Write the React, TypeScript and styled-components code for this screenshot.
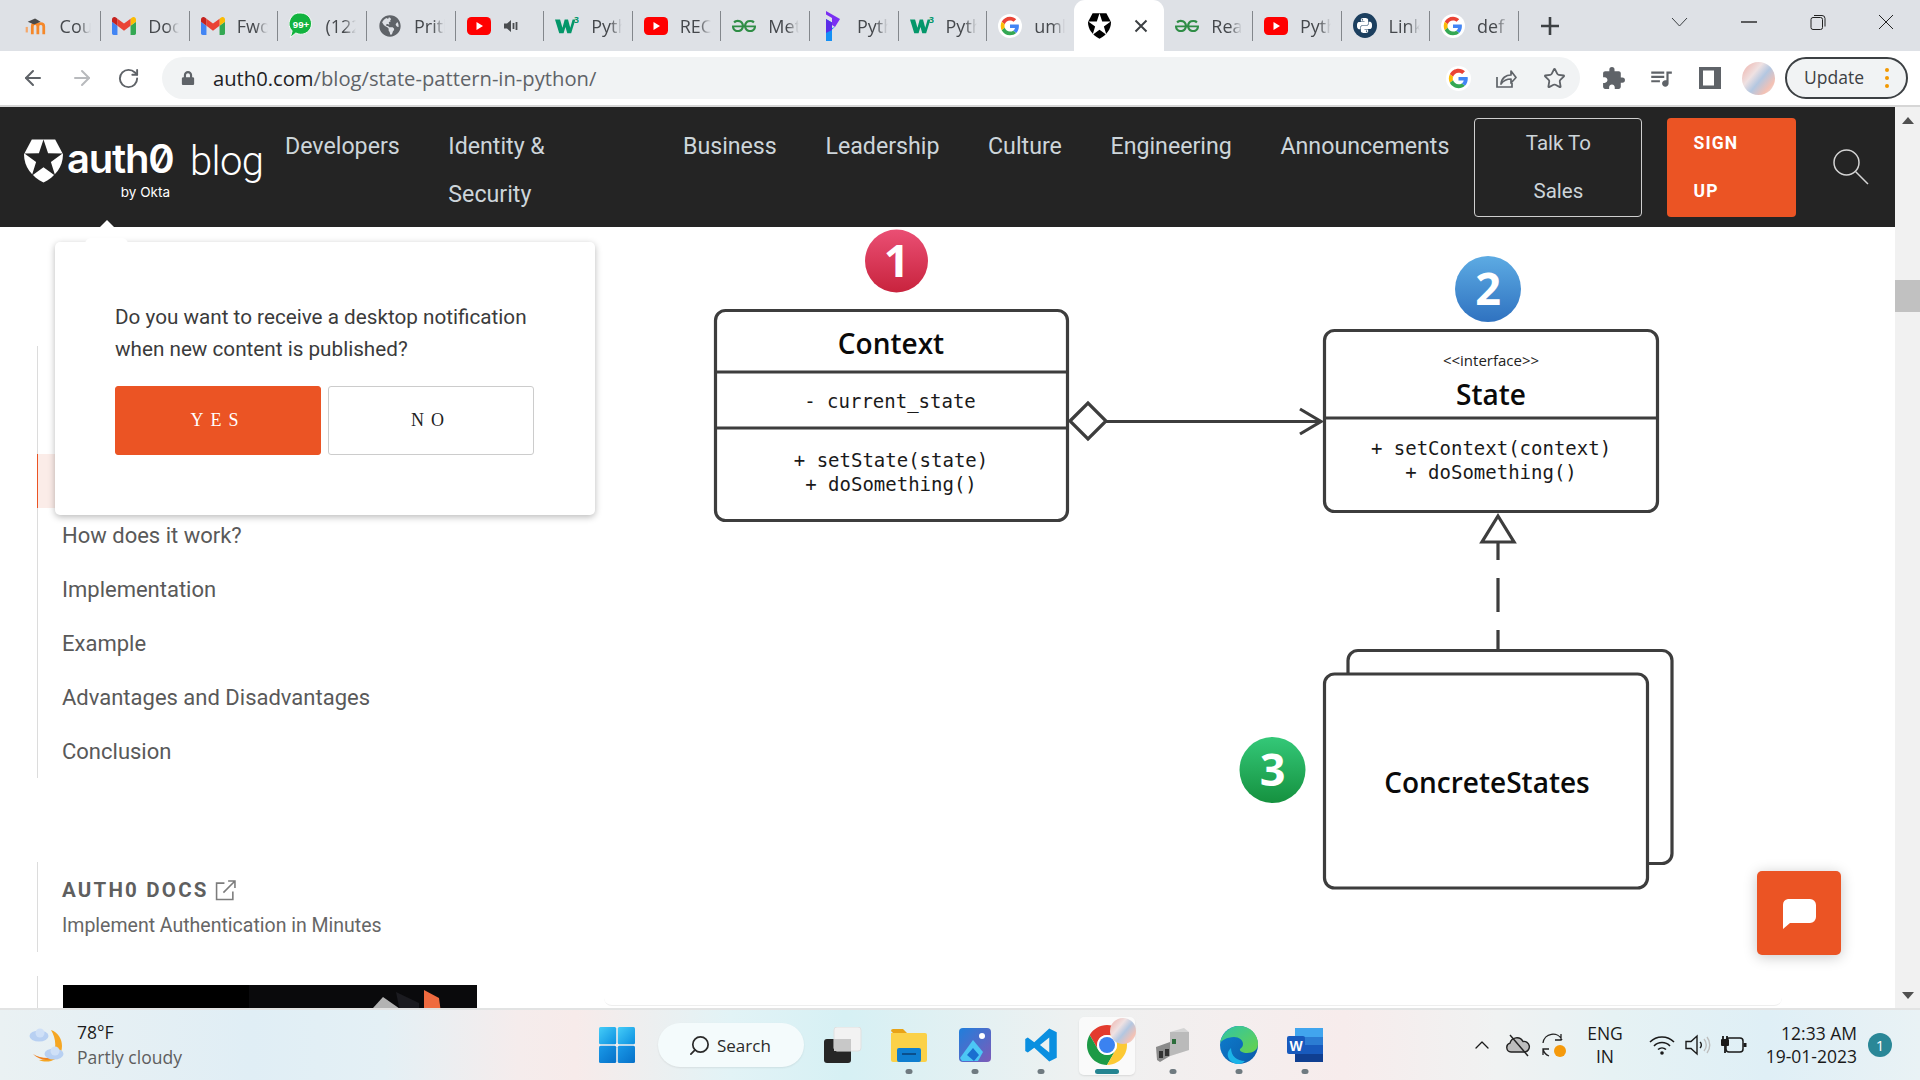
import React from "react";
import styled, { createGlobalStyle } from "styled-components";
import { ArrowLeft, ArrowRight, RotateCw, Star, Search as SearchGlyph, ChevronUp } from "lucide-react";
import { MdExtension, MdOutlineQueueMusic } from "react-icons/md";
import { SiGeeksforgeeks, SiPython } from "react-icons/si";
import { FaGlobeAmericas, FaLock } from "react-icons/fa";

const ORANGE = "#eb5424";
const CHROME_FONT = `"Open Sans", "Noto Sans", sans-serif`;
const SITE_FONT = `Roboto, "Liberation Sans", sans-serif`;

const Global = createGlobalStyle`
  html, body { margin: 0; padding: 0; width: 1920px; height: 1080px; overflow: hidden; background: #fff; }
  * { box-sizing: border-box; }
`;

const Screen = styled.div`
  width: 1920px;
  height: 1080px;
  display: flex;
  flex-direction: column;
  overflow: hidden;
  font-family: ${SITE_FONT};
  position: relative;
`;

/* ---------- browser chrome ---------- */
const TabStrip = styled.div`
  height: 51px;
  flex: none;
  background: #dee1e6;
  display: flex;
  padding-left: 12.6px;
  position: relative;
`;
const TabBox = styled.div<{ $active?: boolean; $noDivider?: boolean }>`
  position: relative;
  width: ${(p) => (p.$active ? "90.6px" : "88.6px")};
  margin-left: ${(p) => (p.$active ? "-2px" : "0")};
  height: 51px;
  flex: none;
  display: flex;
  align-items: center;
  padding-left: ${(p) => (p.$active ? "14px" : "11px")};
  background: ${(p) => (p.$active ? "#fff" : "transparent")};
  border-radius: ${(p) => (p.$active ? "11px 11px 0 0" : "0")};
  &::after {
    content: "";
    display: ${(p) => (p.$noDivider ? "none" : "block")};
    position: absolute;
    right: 0;
    top: 11px;
    width: 1px;
    height: 30px;
    background: #83878c;
  }
`;
const TabIcon = styled.span`
  width: 24px;
  height: 24px;
  flex: none;
  display: flex;
  align-items: center;
  justify-content: center;
  margin-right: 12px;
`;
const TabTitle = styled.span`
  font: 400 18px/24px ${CHROME_FONT};
  color: #45484c;
  width: 31px;
  overflow: hidden;
  white-space: nowrap;
  -webkit-mask-image: linear-gradient(90deg, #000 60%, transparent);
  mask-image: linear-gradient(90deg, #000 60%, transparent);
`;
const TabClose = styled.span`
  margin-left: 10px;
  display: flex;
`;
const NewTab = styled.span`
  margin-left: 21px;
  margin-top: 16px;
  height: 20px;
  display: flex;
`;
const WindowControls = styled.div`
  margin-left: auto;
  display: flex;
  align-items: center;
  height: 51px;
  padding-bottom: 8px;
`;
const WindowButton = styled.span<{ $w: number }>`
  width: ${(p) => p.$w}px;
  display: flex;
  justify-content: center;
`;

const Toolbar = styled.div`
  height: 54px;
  flex: none;
  background: #fff;
  display: flex;
  align-items: center;
  padding: 0 12px 0 21px;
`;
const ToolIcon = styled.span<{ $mr: number; $color?: string }>`
  display: flex;
  flex: none;
  margin-right: ${(p) => p.$mr}px;
  color: ${(p) => p.$color || "#5f6368"};
`;
const Omnibox = styled.div`
  width: 1418px;
  height: 42px;
  border-radius: 21px;
  background: #f1f3f4;
  display: flex;
  align-items: center;
  padding-left: 19px;
  flex: none;
  margin-right: 21px;
`;
const Url = styled.div`
  font: 400 20.2px/44px ${CHROME_FONT};
  color: #5f6368;
  margin-left: 18px;
  flex: 1;
  white-space: nowrap;
  b { font-weight: 400; color: #202124; }
`;
const UpdatePill = styled.div`
  width: 123px;
  height: 42px;
  margin-left: 10px;
  border: 2px solid #3c4043;
  border-radius: 21px;
  background: #f1f3f4;
  display: flex;
  align-items: center;
  padding-left: 17px;
  font: 400 17.5px/1 ${CHROME_FONT};
  color: #3c4043;
  gap: 21px;
  flex: none;
`;
const OrangeDots = styled.span`
  display: flex;
  flex-direction: column;
  gap: 3.5px;
  i { width: 4.5px; height: 4.5px; border-radius: 50%; background: #f29900; display: block; }
`;
const Avatar = styled.span<{ $size: number }>`
  width: ${(p) => p.$size}px;
  height: ${(p) => p.$size}px;
  border-radius: 50%;
  flex: none;
  display: block;
  background:
    linear-gradient(130deg, rgba(240,170,160,.9) 0%, rgba(255,235,230,.3) 35%, rgba(170,195,225,.85) 55%, rgba(245,190,175,.9) 80%, rgba(230,235,240,1) 100%),
    #e8dde0;
`;
const ChromeDivider = styled.div`
  height: 2px;
  flex: none;
  background: #d6d6d6;
`;

/* ---------- web page ---------- */
const Viewport = styled.div`
  height: 901px;
  flex: none;
  display: flex;
  position: relative;
`;
const Page = styled.div`
  width: 1895px;
  flex: none;
  display: flex;
  flex-direction: column;
  overflow: hidden;
`;
const NavBar = styled.nav`
  height: 120px;
  flex: none;
  background: #242424;
  display: flex;
  align-items: flex-start;
  padding: 11px 26px 0 24px;
  position: relative;
  &::after {
    content: "";
    position: absolute;
    left: 100px;
    bottom: 0;
    border-left: 7px solid transparent;
    border-right: 7px solid transparent;
    border-bottom: 7px solid #fff;
  }
`;
const LogoBlock = styled.div`
  width: 261px;
  flex: none;
  display: flex;
  align-items: flex-start;
  padding-top: 21px;
`;
const LogoText = styled.div`
  margin-left: 4px;
  width: 103px;
  color: #fff;
`;
const LogoWord = styled.div`
  font: 600 40px/40px Inter, sans-serif;
  letter-spacing: -1.2px;
  font-feature-settings: "zero" 1;
  white-space: nowrap;
`;
const ByOkta = styled.div`
  font: 400 13.5px/16px Inter, sans-serif;
  text-align: right;
  margin-top: 5px;
`;
const BlogWord = styled.div`
  margin-left: 20px;
  font: 300 40px/44px ${SITE_FONT};
  color: #fff;
  margin-top: 1px;
  letter-spacing: -0.6px;
`;
const NavLinks = styled.div`
  display: flex;
  gap: 48.6px;
  flex: none;
  padding-top: 4px;
`;
const NavLink = styled.a<{ $w?: number }>`
  font: 400 23.2px/48px ${SITE_FONT};
  color: #cdd5da;
  display: block;
  width: ${(p) => (p.$w ? `${p.$w}px` : "auto")};
  white-space: nowrap;
`;
const TalkButton = styled.div`
  width: 168px;
  height: 99px;
  margin-left: 25px;
  flex: none;
  border: 1px solid #cfcfcf;
  border-radius: 4px;
  text-align: center;
  font: 400 20.5px/48px ${SITE_FONT};
  color: #cdd5da;
`;
const SignButton = styled.div`
  width: 129px;
  height: 99px;
  margin-left: 25px;
  flex: none;
  background: ${ORANGE};
  border-radius: 4px;
  padding: 1px 26px;
  font: 700 17.5px/48px ${SITE_FONT};
  letter-spacing: 1.2px;
  color: #fff;
`;
const SearchIconWrap = styled.div`
  margin-left: auto;
  margin-top: 31px;
  display: flex;
`;

const PageBody = styled.div`
  flex: 1;
  display: flex;
  min-height: 0;
`;
const Sidebar = styled.aside`
  width: 604px;
  flex: none;
  padding: 119px 0 0 37px;
`;
const Toc = styled.ul`
  margin: 0;
  padding: 0;
  list-style: none;
  border-left: 1px solid #dcdcdc;
  width: 540px;
`;
const TocItem = styled.li<{ $active?: boolean }>`
  height: 54px;
  padding-left: 24px;
  font: 400 22px/56px ${SITE_FONT};
  color: #595959;
  margin-left: -1px;
  border-left: 1px solid ${(p) => (p.$active ? ORANGE : "transparent")};
  background: ${(p) => (p.$active ? "#fbece8" : "transparent")};
`;
const DocsBlock = styled.div`
  margin-top: 84px;
  height: 90px;
  border-left: 1px solid #dcdcdc;
  padding: 15px 0 0 24px;
`;
const DocsHeading = styled.div`
  display: flex;
  align-items: center;
  gap: 6px;
  font: 700 20.5px/26px ${SITE_FONT};
  letter-spacing: 2.2px;
  color: #5f5f5f;
`;
const DocsSub = styled.div`
  font: 400 19.5px/26px ${SITE_FONT};
  color: #666;
  margin-top: 10px;
`;
const PromoBlock = styled.div`
  margin-top: 24px;
  height: 60px;
  border-left: 1px solid #dcdcdc;
  padding: 9px 0 0 25px;
`;
const Article = styled.main`
  width: 1178px;
  height: 779px;
  flex: none;
  padding-left: 96px;
  border-bottom: 1px solid #eee;
  border-bottom-left-radius: 8px;
  border-bottom-right-radius: 8px;
`;
const ScrollTrack = styled.div`
  width: 25px;
  flex: none;
  background: #f1f1f1;
  display: flex;
  flex-direction: column;
  align-items: center;
  padding-top: 10px;
`;
const ScrollThumb = styled.div`
  width: 25px;
  height: 32px;
  background: #c1c1c1;
  margin-top: 156px;
`;
const ScrollDown = styled.div`
  margin-top: auto;
  margin-bottom: 9px;
  display: flex;
`;
const Popup = styled.div`
  position: absolute;
  left: 55px;
  top: 135px;
  width: 540px;
  height: 273px;
  background: #fff;
  border-radius: 5px;
  box-shadow: 0 2px 7px rgba(0, 0, 0, 0.28);
  padding: 59px 60px 0;
  &::before {
    content: "";
    position: absolute;
    left: 30px;
    top: -4px;
    width: 43px;
    height: 6px;
    background: #fff;
    border-radius: 8px 8px 0 0;
  }
`;
const PopupText = styled.div`
  font: 400 20.7px/32px ${SITE_FONT};
  color: #3b3b3b;
  white-space: nowrap;
`;
const PopupButtons = styled.div`
  display: flex;
  gap: 7px;
  margin-top: 21px;
`;
const PopupButton = styled.div<{ $primary?: boolean }>`
  width: 206px;
  height: 69px;
  border-radius: 3px;
  background: ${(p) => (p.$primary ? ORANGE : "#fff")};
  border: 1px solid ${(p) => (p.$primary ? ORANGE : "#cccccc")};
  color: ${(p) => (p.$primary ? "#fff" : "#222")};
  font: 400 18px/67px "Liberation Serif", serif;
  letter-spacing: 7px;
  text-align: center;
`;
const ChatButton = styled.div`
  position: absolute;
  left: 1757px;
  top: 764px;
  width: 84px;
  height: 84px;
  padding-top: 1px;
  border-radius: 5px;
  background: ${ORANGE};
  box-shadow: 0 2px 14px rgba(0, 0, 0, 0.22);
  display: flex;
  align-items: center;
  justify-content: center;
`;

/* ---------- taskbar ---------- */
const Taskbar = styled.footer`
  height: 72px;
  flex: none;
  border-top: 2px solid #e2e3e3;
  display: flex;
  align-items: center;
  position: relative;
  background: linear-gradient(90deg, #eaf1f3 0%, #e0eef5 13%, #e4f0f5 20%, #f5ecec 27%, #f7ebea 30%, #e2f3f6 38%, #d6f0f4 44%, #eef1f1 56%, #f4eeee 64%, #f7ecec 70%, #f0f2f2 78%, #e6f2f4 84%, #dfeff6 92%, #e9f2f5 100%);
`;
const Weather = styled.div`
  width: 599px;
  flex: none;
  display: flex;
  align-items: center;
  padding-left: 29px;
  gap: 11px;
`;
const WeatherText = styled.div`
  font: 400 17.5px/25px ${CHROME_FONT};
  color: #1c1c1c;
  span { color: #5e5e5e; display: block; }
`;
const TaskCenter = styled.div`
  display: flex;
  align-items: center;
  flex: none;
`;
const WinLogo = styled.span`
  display: flex;
  margin-right: 23px;
`;
const TaskSearch = styled.div`
  width: 146px;
  height: 44px;
  border-radius: 22px;
  background: #f4fbfc;
  box-shadow: 0 1px 2px rgba(0, 0, 0, 0.08);
  display: flex;
  align-items: center;
  padding-left: 30px;
  gap: 6px;
  font: 400 17px/1 ${CHROME_FONT};
  color: #2a2a2a;
  margin-right: 6px;
`;
const MirroredSearch = styled(SearchGlyph)`
  transform: scaleX(-1);
`;
const TaskApp = styled.div<{ $active?: boolean; $noDot?: boolean }>`
  width: 66px;
  height: 70px;
  flex: none;
  display: flex;
  align-items: center;
  justify-content: center;
  position: relative;
  &::before {
    content: "";
    display: ${(p) => (p.$active ? "block" : "none")};
    position: absolute;
    left: 5px;
    right: 5px;
    top: 7px;
    bottom: 5px;
    background: rgba(255, 255, 255, 0.65);
    border-radius: 5px;
    box-shadow: 0 1px 2px rgba(0, 0, 0, 0.1);
  }
  &::after {
    content: "";
    display: ${(p) => (p.$noDot ? "none" : "block")};
    position: absolute;
    bottom: 6px;
    left: 50%;
    transform: translateX(-50%);
    height: 5px;
    border-radius: 3px;
    width: ${(p) => (p.$active ? "24px" : "7px")};
    background: ${(p) => (p.$active ? "#248491" : "#6f7a80")};
  }
`;
const AppGlyph = styled.span`
  position: relative;
  display: flex;
  z-index: 1;
`;
const AppBadge = styled.span`
  position: absolute;
  right: -9px;
  top: -7px;
`;
const Tray = styled.div`
  margin-left: auto;
  display: flex;
  align-items: center;
  padding-right: 28px;
  color: #1a1a1a;
`;
const TrayIcon = styled.span<{ $w: number }>`
  width: ${(p) => p.$w}px;
  flex: none;
  display: flex;
  justify-content: center;
`;
const TrayLang = styled.div`
  width: 66px;
  flex: none;
  text-align: center;
  font: 400 17.5px/23px ${CHROME_FONT};
  color: #1a1a1a;
  margin-right: 6px;
`;
const TrayClock = styled.div`
  width: 104px;
  margin-left: 1px;
  flex: none;
  text-align: right;
  font: 400 17.5px/23px ${CHROME_FONT};
  white-space: nowrap;
`;
const NotifyBadge = styled.div`
  width: 24px;
  height: 24px;
  margin-left: 11px;
  border-radius: 50%;
  background: #2a8797;
  color: #fff;
  font: 400 15px/24px ${CHROME_FONT};
  text-align: center;
`;
const PyBadge = styled.span`
  width: 25px;
  height: 25px;
  border-radius: 50%;
  background: #1c3f5f;
  display: flex;
  align-items: center;
  justify-content: center;
`;

/* ---------- drawings ---------- */
const GoogleG = ({ size = 24 }: { size?: number }) => (
  <svg width={size} height={size} viewBox="-7 -7 62 62">
    <circle cx="24" cy="24" r="31" fill="#fff" />
    <path fill="#EA4335" d="M24 9.5c3.54 0 6.71 1.22 9.21 3.6l6.85-6.85C35.9 2.38 30.47 0 24 0 14.62 0 6.51 5.38 2.56 13.22l7.98 6.19C12.43 13.72 17.74 9.5 24 9.5z" />
    <path fill="#4285F4" d="M46.98 24.55c0-1.57-.15-3.09-.38-4.55H24v9.02h12.94c-.58 2.96-2.26 5.48-4.78 7.18l7.73 6c4.51-4.18 7.09-10.36 7.09-17.65z" />
    <path fill="#FBBC05" d="M10.53 28.59c-.48-1.45-.76-2.99-.76-4.59s.27-3.14.76-4.59l-7.98-6.19C.92 16.46 0 20.12 0 24c0 3.88.92 7.54 2.56 10.78l7.97-6.19z" />
    <path fill="#34A853" d="M24 48c6.48 0 11.93-2.13 15.89-5.81l-7.73-6c-2.15 1.45-4.92 2.3-8.16 2.3-6.26 0-11.57-4.22-13.47-9.91l-7.98 6.19C6.51 42.62 14.62 48 24 48z" />
  </svg>
);
const Gmail = () => (
  <svg width="24" height="18" viewBox="52 42 88 66">
    <path fill="#4285f4" d="M58 108h14V74L52 59v43c0 3.32 2.69 6 6 6" />
    <path fill="#34a853" d="M120 108h14c3.32 0 6-2.69 6-6V59l-20 15" />
    <path fill="#fbbc04" d="M120 48v26l20-15v-8c0-7.42-8.47-11.65-14.4-7.2" />
    <path fill="#ea4335" d="M72 74V48l24 18 24-18v26L96 92" />
    <path fill="#c5221f" d="M52 51v8l20 15V48l-5.6-4.2c-5.94-4.45-14.4-.22-14.4 7.2" />
  </svg>
);
const YouTube = () => (
  <svg width="24" height="18" viewBox="0 0 24 18">
    <rect width="24" height="18" rx="4.5" fill="#f00" />
    <path d="M9.5 5v8l6.5-4z" fill="#fff" />
  </svg>
);
const Moodle = () => (
  <svg width="28" height="24" viewBox="0 0 26 22">
    <path d="M9 20V11.5c0-2.2 1.4-3 3-3s3 .8 3 3V20M15 11.5c0-2.2 1.4-3 3-3s3.4.8 3.4 3V20" fill="none" stroke="#f5882a" strokeWidth="3" />
    <path d="M3 12v6" stroke="#f5a76a" strokeWidth="2.4" />
    <path d="M4 6.5 12 3l6 3.5-7 2.8z" fill="#4a4a4a" />
  </svg>
);
const W3 = () => (
  <svg width="26" height="21" viewBox="0 0 26 21">
    <path d="M0 4h5.500l2.600 9 2.400-9h3.600l2.400 9 2.600-9h3l-4.600 15h-4.200l-2-7-2 7H4.600z" fill="#04976a" />
    <text x="20.500" y="7.500" fontSize="9.500" fontWeight="700" fontFamily="Open Sans" fill="#04976a">3</text>
  </svg>
);
const WhatsBadge = () => (
  <svg width="29" height="33" viewBox="0 0 26 30">
    <path d="M13 1.5a11.5 11.5 0 1 1-5.6 21.6L1.5 28l1.9-7.1A11.5 11.5 0 0 1 13 1.5z" fill="#12b33f" stroke="#fff" strokeWidth="1" />
    <text x="13" y="17.5" textAnchor="middle" fontSize="10.5" fontWeight="700" fontFamily="Liberation Sans" fill="#fff">99+</text>
  </svg>
);
const Programiz = () => (
  <svg width="18" height="30" viewBox="0 0 18 30">
    <path d="M2 0l14 8-5 8-3-2V7L2 3.5z" fill="#7a2ff2" />
    <path d="M2 8l6 3.5V17l3-1-3 2.5V30H2z" fill="#1590f5" />
    <path d="M2 8l6 3.5V19L2 22z" fill="#5a2ce8" />
  </svg>
);
const Geeks = () => <SiGeeksforgeeks size={24} color="#2f8d46" />;
const PyRound = () => (
  <PyBadge><SiPython size={15} color="#fff" /></PyBadge>
);
const Shield = ({ w, h, body, star }: { w: number; h: number; body: string; star: string }) => (
  <svg width={w} height={h} viewBox="0 0 40 44">
    <path d="M8 0H32L40 15C40 28 32 38 20 44 8 38 0 28 0 15Z" fill={body} />
    <path d="M20 0 24.700 14 39.500 14.200 27.600 23 32 37.100 20 28.500 8 37.100 12.400 23 .5 14.200 15.300 14Z" fill={star} />
  </svg>
);
const Speaker = () => (
  <svg width="16" height="16" viewBox="0 0 16 16">
    <path d="M1 5.5h3L8 2v12L4 10.5H1z" fill="#4a4d50" />
    <path d="M10.5 5v6M13.5 4v8" stroke="#4a4d50" strokeWidth="1.8" />
  </svg>
);
const Share = () => (
  <svg width="24" height="24" viewBox="0 0 24 24" fill="none" stroke="#5f6368" strokeWidth="1.7">
    <path d="M4 11v10h15v-4" />
    <path d="M8 18c.5-6 5-9 10-9V5l5 6.5-5 5.5v-4c-4 0-7.500 1.500-10 5z" strokeLinejoin="round" />
  </svg>
);
const SidePanel = () => (
  <svg width="22" height="22" viewBox="0 0 22 22">
    <path d="M0 0h22v22H0zM4 3.500v15h11v-15z" fill="#5f6368" fillRule="evenodd" />
  </svg>
);
const Windows = () => (
  <svg width="36" height="36" viewBox="0 0 36 36">
    <defs>
      <linearGradient id="winA" x1="0" y1="0" x2="1" y2="1"><stop offset="0" stopColor="#45cdf8" /><stop offset="1" stopColor="#0c8fe0" /></linearGradient>
      <linearGradient id="winB" x1="0" y1="0" x2="1" y2="1"><stop offset="0" stopColor="#1a9ae8" /><stop offset="1" stopColor="#0670c8" /></linearGradient>
    </defs>
    <rect x="0" y="0" width="17.200" height="17.200" rx="1.500" fill="url(#winA)" />
    <rect x="18.800" y="0" width="17.200" height="17.200" rx="1.500" fill="url(#winA)" />
    <rect x="0" y="18.800" width="17.200" height="17.200" rx="1.500" fill="url(#winB)" />
    <rect x="18.800" y="18.800" width="17.200" height="17.200" rx="1.500" fill="url(#winB)" />
  </svg>
);
const TaskView = () => (
  <svg width="38" height="36" viewBox="0 0 38 36">
    <rect x="0" y="12" width="27" height="24" rx="3" fill="#262626" />
    <rect x="10" y="0" width="27" height="24" rx="3" fill="#f2f2f2" stroke="#e0e0e0" />
    <rect x="10" y="12" width="17" height="12" fill="#c8c8c8" />
  </svg>
);
const Explorer = () => (
  <svg width="36" height="34" viewBox="0 0 36 34">
    <path d="M0 3a2 2 0 0 1 2-2h10l4 4H2z" fill="#e8a317" />
    <path d="M0 5h34a2 2 0 0 1 2 2v25a2 2 0 0 1-2 2H2a2 2 0 0 1-2-2z" fill="#fbd148" />
    <rect x="6" y="20" width="24" height="14" rx="2" fill="#0f7ed0" />
    <rect x="11" y="25" width="14" height="2" fill="#0a4f8c" />
  </svg>
);
const Photos = () => (
  <svg width="32" height="34" viewBox="0 0 32 34">
    <defs>
      <linearGradient id="phBg" x1="0" y1="0" x2="1" y2="1"><stop offset="0" stopColor="#1f7fdc" /><stop offset="1" stopColor="#7d5bb8" /></linearGradient>
    </defs>
    <rect width="32" height="34" rx="4" fill="url(#phBg)" />
    <circle cx="23" cy="8" r="3" fill="#fff" />
    <path d="M1 30 14 12l10 12-5 9H3z" fill="#4cc7f5" />
    <path d="M8 27l6-7 6 7-5 6z" fill="#1a6ed0" />
  </svg>
);
const VSCode = () => (
  <svg width="36" height="38" viewBox="0 0 24 24">
    <path d="M17.500 1 22.500 3.500V20.500L17.500 23 7.500 13.800 3.200 17 1.500 16V8l1.700-1 4.300 3.200zM17.500 7 11.300 12l6.200 5z" fill="#0a8fe0" fillRule="evenodd" />
  </svg>
);
const ChromeLogo = () => (
  <svg width="40" height="40" viewBox="4 4 40 40">
    <path d="M41.320 14A20 20 0 0 0 6.680 14L15.340 29A10 10 0 0 1 24 14Z" fill="#e33b2e" />
    <path d="M6.680 14A20 20 0 0 0 24 44L32.660 29A10 10 0 0 1 15.340 29Z" fill="#1c9a46" />
    <path d="M24 44A20 20 0 0 0 41.320 14L24 14A10 10 0 0 1 32.660 29Z" fill="#fcc934" />
    <circle cx="24" cy="24" r="10" fill="#fff" />
    <circle cx="24" cy="24" r="8" fill="#3b82f0" />
  </svg>
);
const Driver = () => (
  <svg width="34" height="36" viewBox="0 0 34 36">
    <path d="M14 5 28 1l5 4v18l-19 6z" fill="#d4d4d4" />
    <path d="M14 5v24l19-6V5z" fill="#a9a9a9" opacity=".6" />
    <rect x="16" y="12" width="4" height="5" fill="#2d6e3c" />
    <path d="M0 20 14 15v14L4 35l-3-2z" fill="#8b8b8b" />
    <rect x="3" y="24" width="4" height="7" fill="#333" />
    <rect x="9" y="22" width="4" height="7" fill="#333" />
  </svg>
);
const EdgeLogo = () => (
  <svg width="38" height="38" viewBox="0 0 38 38">
    <defs>
      <linearGradient id="edA" x1="0" y1="0" x2="1" y2="1"><stop offset="0" stopColor="#2fc4a8" /><stop offset="1" stopColor="#68d24a" /></linearGradient>
      <linearGradient id="edB" x1="0" y1="0" x2="1" y2="1"><stop offset="0" stopColor="#0d7fd0" /><stop offset="1" stopColor="#0c5aa8" /></linearGradient>
    </defs>
    <circle cx="19" cy="19" r="19" fill="url(#edB)" />
    <path d="M0 17C2 6 11 0 19 0c11 0 19 8 19 18 0 6-5 9-11 9-4 0-8-2-7-4 1-1 3-2 3-5 0-4-4-7-9-7-7 0-13 4-14 6z" fill="url(#edA)" />
    <path d="M11 22c0 8 6 13 14 13-2 2-4 3-6 3C9 38 4 28 11 22z" fill="#1bb3e8" />
  </svg>
);
const WordLogo = () => (
  <svg width="36" height="34" viewBox="0 0 36 34">
    <rect x="8" y="0" width="28" height="34" rx="2" fill="#2b7cd3" />
    <rect x="8" y="0" width="28" height="9" fill="#41a5ee" />
    <rect x="8" y="17" width="28" height="9" fill="#185abd" />
    <rect x="8" y="26" width="28" height="8" fill="#103f91" />
    <rect x="0" y="8" width="18" height="18" rx="2" fill="#185abd" />
    <text x="9" y="22.500" textAnchor="middle" fontSize="14" fontWeight="700" fontFamily="Liberation Sans" fill="#fff">W</text>
  </svg>
);
const WeatherIcon = () => (
  <svg width="37" height="36" viewBox="0 0 37 36">
    <path d="M22 3c9 3 13 13 10 22-3 8-13 12-22 8 8 0 15-4 16-12 1-7-1-13-4-18z" fill="#f5a623" />
    <path d="M4 27c6 6 15 8 22 3-7 2-16 1-22-3z" fill="#ee7f1e" />
    <ellipse cx="10" cy="9" rx="9.500" ry="5.500" fill="#b8d0f2" />
    <circle cx="11" cy="6" r="4.500" fill="#cfe0f7" />
    <ellipse cx="25" cy="27" rx="9.500" ry="5.500" fill="#b8d0f2" />
    <circle cx="26" cy="24" r="4.500" fill="#cfe0f7" />
  </svg>
);

const Circle = ({ cx, cy, r, id, from, to, label }: { cx: number; cy: number; r: number; id: string; from: string; to: string; label: string }) => (
  <g>
    <defs>
      <linearGradient id={id} x1="0" y1="0" x2="0" y2="1"><stop offset="0" stopColor={from} /><stop offset="1" stopColor={to} /></linearGradient>
    </defs>
    <circle cx={cx} cy={cy} r={r} fill={`url(#${id})`} />
    <text x={cx} y={cy + 16} textAnchor="middle" fontFamily="Open Sans" fontWeight="700" fontSize="45" fill="#fff">{label}</text>
  </g>
);
const HEAD = { fontFamily: "Open Sans", fontWeight: 600, fontSize: 28, fill: "#0a0a0a", textAnchor: "middle" as const };
const MONO = { fontFamily: "DejaVu Sans Mono", fontSize: 19, fill: "#1a1a1a", textAnchor: "middle" as const };

const Diagram = () => (
  <svg width="1000" height="779" viewBox="700 227 1000 779" fill="none">
    <g stroke="#3d3d3d" strokeWidth="3.200">
      <rect x="715.500" y="310.500" width="352" height="210" rx="10" fill="#fff" />
      <path d="M715.500 372h352M715.500 428h352" />
      <path d="M1070 421l18-18 18 18-18 18z" />
      <path d="M1106 421.500h214M1300 409l21 12.500-21 12.500" />
      <rect x="1324.500" y="330.500" width="333" height="181" rx="10" fill="#fff" />
      <path d="M1324.500 418h333" />
      <path d="M1498 516l16 26h-32zM1498 542v18M1498 578v34M1498 630v20" />
      <rect x="1348" y="650.500" width="324" height="213" rx="10" fill="#fff" />
      <rect x="1324.500" y="674" width="323" height="214" rx="10" fill="#fff" />
    </g>
    <Circle cx={896.500} cy={261} r={31.500} id="c1" from="#ea4f74" to="#c8233d" label="1" />
    <Circle cx={1488} cy={289} r={33} id="c2" from="#5dabe3" to="#2f72c0" label="2" />
    <Circle cx={1272.500} cy={770} r={33} id="c3" from="#34c878" to="#15913f" label="3" />
    <text x="891" y="354" {...HEAD}>Context</text>
    <text x="890" y="408" {...MONO}>- current_state</text>
    <text x="891" y="467" {...MONO}>+ setState(state)</text>
    <text x="891" y="491" {...MONO}>+ doSomething()</text>
    <text x="1491" y="366" fontFamily="Open Sans" fontSize="15" fill="#222" textAnchor="middle">{"<<interface>>"}</text>
    <text x="1491" y="405" {...HEAD}>State</text>
    <text x="1491" y="455" {...MONO}>+ setContext(context)</text>
    <text x="1491" y="479" {...MONO}>+ doSomething()</text>
    <text x="1487" y="793" {...HEAD}>ConcreteStates</text>
  </svg>
);

const PromoArt = () => (
  <svg width="414" height="51" viewBox="0 0 414 51">
    <rect width="414" height="51" fill="#000" />
    <rect x="186" width="228" height="51" fill="#0a0a0c" />
    <path d="M310 23 320 12 340 26V51H310z" fill="#b3b3b3" />
    <path d="M333 7 356 18V51H342z" fill="#1b1b20" />
    <path d="M361 5 376 13 381 51H361z" fill="#ef6a3f" />
  </svg>
);

type TabDef = { icon: React.ReactNode; title: string; noDivider?: boolean };
const tabs: TabDef[] = [
  { icon: <Moodle />, title: "Cou" },
  { icon: <Gmail />, title: "Doc" },
  { icon: <Gmail />, title: "Fwd" },
  { icon: <WhatsBadge />, title: "(122" },
  { icon: <FaGlobeAmericas size={22} color="#5f6368" />, title: "Prith" },
  { icon: <YouTube />, title: "" },
  { icon: <W3 />, title: "Pyth" },
  { icon: <YouTube />, title: "REC" },
  { icon: <Geeks />, title: "Met" },
  { icon: <Programiz />, title: "Pyth" },
  { icon: <W3 />, title: "Pyth" },
  { icon: <GoogleG />, title: "uml", noDivider: true },
];
const tabsAfter: TabDef[] = [
  { icon: <Geeks />, title: "Rea" },
  { icon: <YouTube />, title: "Pyth" },
  { icon: <PyRound />, title: "Link" },
  { icon: <GoogleG />, title: "def" },
];

const renderTab = (t: TabDef, i: number) => (
  <TabBox key={i} $noDivider={t.noDivider}>
    <TabIcon>{t.icon}</TabIcon>
    {t.title ? <TabTitle>{t.title}</TabTitle> : <Speaker />}
  </TabBox>
);

export default function App() {
  return (
    <Screen>
      <Global />
      <TabStrip>
        {tabs.map(renderTab)}
        <TabBox $active $noDivider>
          <TabIcon><Shield w={23} h={26} body="#000" star="#fff" /></TabIcon>
          <TabClose>
            <svg width="14" height="14" viewBox="0 0 14 14"><path d="M1.500 1.500l11 11M12.500 1.500l-11 11" stroke="#3c4043" strokeWidth="2" /></svg>
          </TabClose>
        </TabBox>
        {tabsAfter.map((t, i) => renderTab(t, i + 100))}
        <NewTab>
          <svg width="20" height="20" viewBox="0 0 20 20"><path d="M10 1v18M1 10h18" stroke="#3c4043" strokeWidth="2.600" /></svg>
        </NewTab>
        <WindowControls>
          <WindowButton $w={69}>
            <svg width="17" height="10" viewBox="0 0 17 10"><path d="M1 1l7.500 8L16 1" fill="none" stroke="#3c4043" strokeWidth="1" /></svg>
          </WindowButton>
          <WindowButton $w={69}>
            <svg width="16" height="2" viewBox="0 0 16 2"><path d="M0 1h16" stroke="#222" strokeWidth="1.400" /></svg>
          </WindowButton>
          <WindowButton $w={69}>
            <svg width="16" height="16" viewBox="0 0 16 16" fill="none" stroke="#222" strokeWidth="1"><rect x="1" y="3.500" width="11.500" height="12" rx="2" /><path d="M4 1.500h8a3 3 0 0 1 3 3v8" /></svg>
          </WindowButton>
          <WindowButton $w={68}>
            <svg width="16" height="16" viewBox="0 0 16 16"><path d="M1 1l14 14M15 1L1 15" stroke="#222" strokeWidth="1" /></svg>
          </WindowButton>
        </WindowControls>
      </TabStrip>

      <Toolbar>
        <ToolIcon $mr={25}><ArrowLeft size={24} strokeWidth={2} /></ToolIcon>
        <ToolIcon $mr={23} $color="#b8babd"><ArrowRight size={24} strokeWidth={2} /></ToolIcon>
        <ToolIcon $mr={22}><RotateCw size={23} strokeWidth={2} /></ToolIcon>
        <Omnibox>
          <ToolIcon $mr={0}><FaLock size={14} /></ToolIcon>
          <Url><b>auth0.com</b>/blog/state-pattern-in-python/</Url>
          <ToolIcon $mr={22}><GoogleG size={25} /></ToolIcon>
          <ToolIcon $mr={26}><Share /></ToolIcon>
          <ToolIcon $mr={14}><Star size={23} strokeWidth={1.900} /></ToolIcon>
        </Omnibox>
        <ToolIcon $mr={22}><MdExtension size={25} /></ToolIcon>
        <ToolIcon $mr={25}><MdOutlineQueueMusic size={26} /></ToolIcon>
        <ToolIcon $mr={21}><SidePanel /></ToolIcon>
        <Avatar $size={33} />
        <UpdatePill>
          Update
          <OrangeDots><i /><i /><i /></OrangeDots>
        </UpdatePill>
      </Toolbar>
      <ChromeDivider />

      <Viewport>
        <Page>
          <NavBar>
            <LogoBlock>
              <Shield w={39} h={44} body="#fff" star="#242424" />
              <LogoText>
                <LogoWord>auth0</LogoWord>
                <ByOkta>by Okta</ByOkta>
              </LogoText>
              <BlogWord>blog</BlogWord>
            </LogoBlock>
            <NavLinks>
              <NavLink>Developers</NavLink>
              <NavLink $w={186}>Identity &amp;<br />Security</NavLink>
              <NavLink>Business</NavLink>
              <NavLink>Leadership</NavLink>
              <NavLink>Culture</NavLink>
              <NavLink>Engineering</NavLink>
              <NavLink>Announcements</NavLink>
            </NavLinks>
            <TalkButton>Talk To<br />Sales</TalkButton>
            <SignButton>SIGN<br />UP</SignButton>
            <SearchIconWrap>
              <svg width="36" height="36" viewBox="0 0 36 36" fill="none" stroke="#d4d4d4" strokeWidth="1.500">
                <circle cx="13.500" cy="13.500" r="12.500" />
                <path d="M22.500 22.500 35 35" />
              </svg>
            </SearchIconWrap>
          </NavBar>
          <PageBody>
            <Sidebar>
              <Toc>
                <TocItem />
                <TocItem />
                <TocItem $active />
                <TocItem>How does it work?</TocItem>
                <TocItem>Implementation</TocItem>
                <TocItem>Example</TocItem>
                <TocItem>Advantages and Disadvantages</TocItem>
                <TocItem>Conclusion</TocItem>
              </Toc>
              <DocsBlock>
                <DocsHeading>
                  AUTH0 DOCS
                  <svg width="21" height="21" viewBox="0 0 20 20" fill="none" stroke="#7c7c7c" strokeWidth="1.500">
                    <path d="M9 3H1.500v15.500H17V11" />
                    <path d="M8 12 19 1M12.500 1H19v6.500" />
                  </svg>
                </DocsHeading>
                <DocsSub>Implement Authentication in Minutes</DocsSub>
              </DocsBlock>
              <PromoBlock><PromoArt /></PromoBlock>
            </Sidebar>
            <Article><Diagram /></Article>
          </PageBody>
        </Page>
        <ScrollTrack>
          <svg width="12" height="7" viewBox="0 0 12 7"><path d="M6 0l6 7H0z" fill="#505050" /></svg>
          <ScrollThumb />
          <ScrollDown>
            <svg width="12" height="7" viewBox="0 0 12 7"><path d="M6 7l6-7H0z" fill="#505050" /></svg>
          </ScrollDown>
        </ScrollTrack>
        <Popup>
          <PopupText>Do you want to receive a desktop notification<br />when new content is published?</PopupText>
          <PopupButtons>
            <PopupButton $primary>YES</PopupButton>
            <PopupButton>NO</PopupButton>
          </PopupButtons>
        </Popup>
        <ChatButton>
          <svg width="34" height="30" viewBox="0 0 34 30"><path d="M6 0h22a6 6 0 0 1 6 6v12a6 6 0 0 1-6 6H8L1 30V6a6 6 0 0 1 5-6z" fill="#fff" /></svg>
        </ChatButton>
      </Viewport>

      <Taskbar>
        <Weather>
          <WeatherIcon />
          <WeatherText>78°F<span>Partly cloudy</span></WeatherText>
        </Weather>
        <TaskCenter>
          <WinLogo><Windows /></WinLogo>
          <TaskSearch><MirroredSearch size={23} strokeWidth={1.800} />Search</TaskSearch>
          <TaskApp $noDot><AppGlyph><TaskView /></AppGlyph></TaskApp>
          <TaskApp><AppGlyph><Explorer /></AppGlyph></TaskApp>
          <TaskApp><AppGlyph><Photos /></AppGlyph></TaskApp>
          <TaskApp><AppGlyph><VSCode /></AppGlyph></TaskApp>
          <TaskApp $active>
            <AppGlyph>
              <ChromeLogo />
              <AppBadge><Avatar $size={26} /></AppBadge>
            </AppGlyph>
          </TaskApp>
          <TaskApp><AppGlyph><Driver /></AppGlyph></TaskApp>
          <TaskApp><AppGlyph><EdgeLogo /></AppGlyph></TaskApp>
          <TaskApp><AppGlyph><WordLogo /></AppGlyph></TaskApp>
        </TaskCenter>
        <Tray>
          <TrayIcon $w={36}><ChevronUp size={24} strokeWidth={1.300} /></TrayIcon>
          <TrayIcon $w={36}>
            <svg width="26" height="24" viewBox="0 0 26 24" fill="none" stroke="#222" strokeWidth="1.400"><path d="M6 19a4.500 4.500 0 0 1-1-8.800A7 7 0 0 1 18 8.500a5 5 0 0 1 2 10.500z" fill="#bdbdbd" /><path d="M5 2l18 21" /></svg>
          </TrayIcon>
          <TrayIcon $w={36}>
            <svg width="26" height="26" viewBox="0 0 26 26" fill="none" stroke="#222" strokeWidth="1.300"><path d="M2 11A10 10 0 0 1 21 8M20 2v6h-6" /><path d="M8 24A10 10 0 0 1 2 17M2 23v-6h6" /><circle cx="19" cy="19" r="6" fill="#f59a0c" stroke="none" /></svg>
          </TrayIcon>
          <TrayLang>ENG<br />IN</TrayLang>
          <TrayIcon $w={36}>
            <svg width="26" height="20" viewBox="0 0 26 20" fill="none" stroke="#1a1a1a" strokeWidth="1.600"><path d="M1 7a17 17 0 0 1 24 0M5 11a11 11 0 0 1 16 0M9 14.500a6 6 0 0 1 8 0" /><circle cx="13" cy="18" r="1.800" fill="#1a1a1a" stroke="none" /></svg>
          </TrayIcon>
          <TrayIcon $w={36}>
            <svg width="26" height="22" viewBox="0 0 26 22" fill="none" stroke="#1a1a1a" strokeWidth="1.400"><path d="M1 7.500h5L12 2v18l-6-5.500H1z" /><path d="M15 8a4 4 0 0 1 0 6" /><path d="M19 5a9 9 0 0 1 0 12M22 3a13 13 0 0 1 0 16" stroke="#bdbdbd" /></svg>
          </TrayIcon>
          <TrayIcon $w={36}>
            <svg width="26" height="20" viewBox="0 0 26 20" fill="none" stroke="#1a1a1a" strokeWidth="1.500"><rect x="5" y="3" width="17" height="14" rx="3" /><path d="M24 8v4" strokeWidth="3" /><rect x="0" y="4" width="8" height="7" rx="1" fill="#1a1a1a" stroke="none" /><path d="M2 1v3M6 1v3M4 11v7" strokeWidth="1.800" /></svg>
          </TrayIcon>
          <TrayClock>12:33 AM<br />19-01-2023</TrayClock>
          <NotifyBadge>1</NotifyBadge>
        </Tray>
      </Taskbar>
    </Screen>
  );
}
